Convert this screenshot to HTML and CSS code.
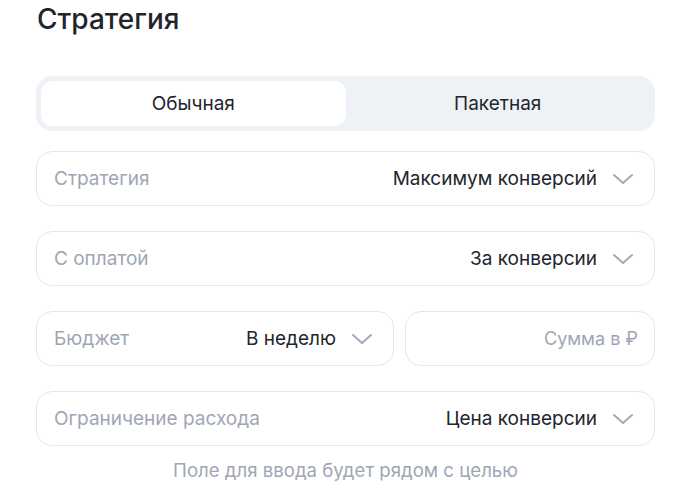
FILE: index.html
```html
<!DOCTYPE html>
<html lang="ru">
<head>
    <meta charset="UTF-8">
    <meta name="viewport" content="width=device-width, initial-scale=1.0">
    <title>Стратегия</title>
    <link rel="stylesheet" href="styles.css">
</head>
<body>
    <div class="panel">
        <h1>Стратегия</h1>

        <!-- Тип стратегии -->
        <div class="segmented">
            <button class="segment active">Обычная</button>
            <button class="segment">Пакетная</button>
        </div>

        <div class="field">
            <span class="label">Стратегия</span>
            <span class="value">Максимум конверсий</span>
            <svg class="chevron" width="20" height="10" viewBox="0 0 20 10"><path d="M1 1l9 8 9-8" fill="none" stroke="#a3abbb" stroke-width="2" stroke-linecap="round" stroke-linejoin="round"/></svg>
        </div>

        <div class="field">
            <span class="label">С оплатой</span>
            <span class="value">За конверсии</span>
            <svg class="chevron" width="20" height="10" viewBox="0 0 20 10"><path d="M1 1l9 8 9-8" fill="none" stroke="#a3abbb" stroke-width="2" stroke-linecap="round" stroke-linejoin="round"/></svg>
        </div>

        <div class="row">
            <div class="field budget">
                <span class="label">Бюджет</span>
                <span class="value">В неделю</span>
                <svg class="chevron" width="20" height="10" viewBox="0 0 20 10"><path d="M1 1l9 8 9-8" fill="none" stroke="#a3abbb" stroke-width="2" stroke-linecap="round" stroke-linejoin="round"/></svg>
            </div>
            <div class="field amount">
                <span class="placeholder">Сумма в ₽</span>
            </div>
        </div>

        <div class="field">
            <span class="label">Ограничение расхода</span>
            <span class="value">Цена конверсии</span>
            <svg class="chevron" width="20" height="10" viewBox="0 0 20 10"><path d="M1 1l9 8 9-8" fill="none" stroke="#a3abbb" stroke-width="2" stroke-linecap="round" stroke-linejoin="round"/></svg>
        </div>
        <p class="hint">Поле для ввода будет рядом с целью</p>
    </div>
</body>
</html>
```

FILE: styles.css
```css
body {
    margin: 0;
    background: #fff;
    font-family: Inter, "Noto Sans", sans-serif;
    color: #21252d;
}
.panel {
    width: 619px;
    margin-left: 36px;
}
h1 {
    margin: 0;
    padding-top: 2px;
    height: 74px;
    font-size: 28px;
    font-weight: 500;
    line-height: 34px;
    margin-left: 1px;
}
.segmented {
    display: flex;
    background: #eef1f6;
    border-radius: 16px;
    padding: 5px;
    height: 45px;
    margin-bottom: 20px;
}
.segment {
    flex: 1;
    border: none;
    background: transparent;
    border-radius: 12px;
    font-family: inherit;
    font-size: 19px;
    color: #21252d;
    cursor: pointer;
}
.segment.active {
    background: #fff;
}
.field {
    display: flex;
    align-items: center;
    box-sizing: border-box;
    height: 55px;
    border: 1px solid #e3e6ee;
    border-radius: 16px;
    padding: 0 21px 0 17px;
    margin-bottom: 25px;
    font-size: 19px;
}
.label {
    flex: 1;
    color: #9ea6b6;
}
.value {
    margin-right: 16px;
}
.row {
    display: flex;
    gap: 11px;
}
.budget {
    flex: 0 0 358px;
}
.amount {
    flex: 1;
    justify-content: flex-end;
    padding-right: 16px;
}
.placeholder {
    color: #9ea6b6;
    font-size: 18px;
}
.hint {
    margin: -12px 0 0;
    text-align: center;
    font-size: 18.6px;
    color: #9ea6b6;
}
```
